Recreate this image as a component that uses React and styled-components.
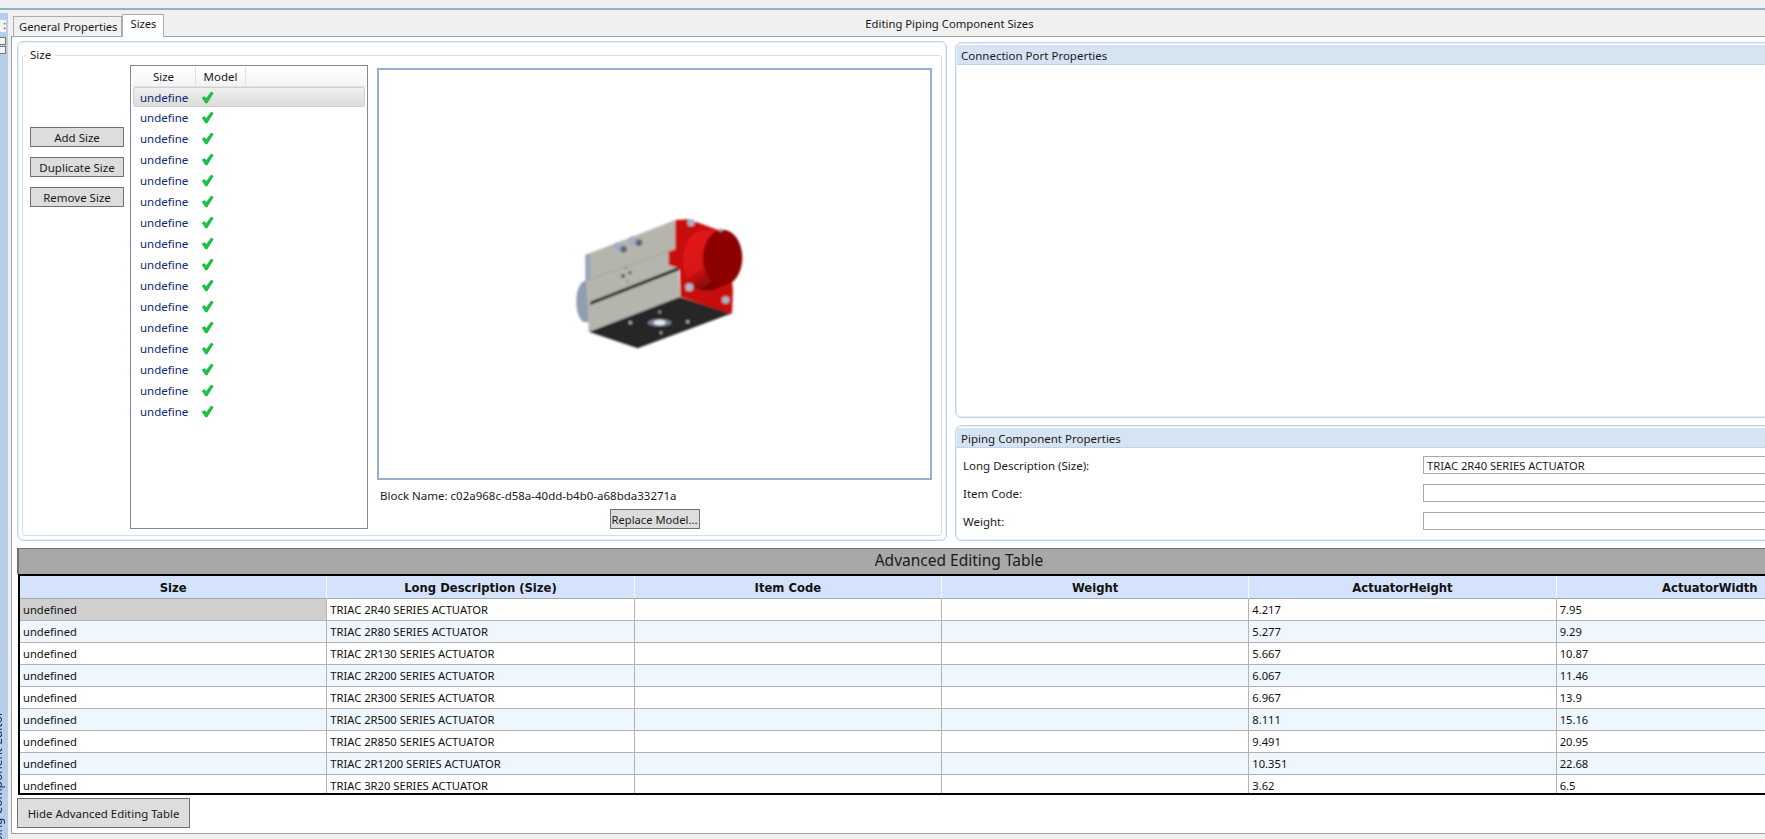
import styled, { createGlobalStyle } from "styled-components"

const sizes = [
  ["TRIAC 2R40 SERIES ACTUATOR", "4.217", "7.95"],
  ["TRIAC 2R80 SERIES ACTUATOR", "5.277", "9.29"],
  ["TRIAC 2R130 SERIES ACTUATOR", "5.667", "10.87"],
  ["TRIAC 2R200 SERIES ACTUATOR", "6.067", "11.46"],
  ["TRIAC 2R300 SERIES ACTUATOR", "6.967", "13.9"],
  ["TRIAC 2R500 SERIES ACTUATOR", "8.111", "15.16"],
  ["TRIAC 2R850 SERIES ACTUATOR", "9.491", "20.95"],
  ["TRIAC 2R1200 SERIES ACTUATOR", "10.351", "22.68"],
  ["TRIAC 3R20 SERIES ACTUATOR", "3.62", "6.5"],
]

const listRows = Array.from({ length: 16 }, (_, i) => i)

const CheckIcon = () => (
  <svg width="13" height="13" viewBox="0 0 13 13">
    <path d="M1.2 6.8 L3.6 5.6 L5.2 7.8 L10.2 1 L12.2 2.2 L6 12 L4.6 12 Z" fill="#12c83c" stroke="#0d8f3a" strokeWidth="0.5" />
  </svg>
)

const ActuatorModel = () => (
  <svg width="240" height="180" viewBox="-16 -18 720 540">
    <defs>
      <filter id="soft"><feGaussianBlur stdDeviation="3.4" /></filter>
      <linearGradient id="barrel" x1="0" y1="0" x2="0.45" y2="1">
        <stop offset="0" stopColor="#e81c1c" />
        <stop offset="0.65" stopColor="#d81414" />
        <stop offset="1" stopColor="#7c0505" />
      </linearGradient>
    </defs>
    <g filter="url(#soft)">
      <ellipse cx="135" cy="335" rx="27" ry="62" fill="#8e9db0" />
      <polygon points="145,425 415,320 575,370 292,475" fill="#262626" />
      <polygon points="135,195 405,90 420,320 145,425 138,280" fill="#b5b5ae" />
      <polygon points="135,195 150,190 150,268 135,276" fill="#93a6ba" />
      <polygon points="150,335 417,230 417,240 150,345" fill="#1c1c1c" />
      <line x1="150" y1="268" x2="395" y2="180" stroke="#97978f" strokeWidth="2" />
      <polygon points="405,90 445,88 560,130 578,300 575,370 560,368 420,320 418,235 385,225 385,185 405,178" fill="#c90a0a" />
      <polygon points="490,125 545,118 545,288 510,305 490,300" fill="url(#barrel)" />
      <ellipse cx="492" cy="212" rx="64" ry="90" fill="url(#barrel)" />
      <ellipse cx="547" cy="203" rx="59" ry="84" fill="#8c0202" />
      <circle cx="452" cy="98" r="11" fill="#a9b3c4" />
      <circle cx="447" cy="292" r="12" fill="#aeb8c8" />
      <circle cx="556" cy="330" r="11" fill="#a9b3c4" />
      <circle cx="541" cy="120" r="5" fill="#9aa5bb" />
      <circle cx="232" cy="170" r="13" fill="#a3aec4" />
      <circle cx="250" cy="178" r="10" fill="#5e6678" />
      <circle cx="277" cy="152" r="13" fill="#a3aec4" />
      <circle cx="296" cy="158" r="10" fill="#5e6678" />
      <circle cx="248" cy="258" r="6" fill="#55554f" />
      <circle cx="269" cy="248" r="5" fill="#55554f" />
      <circle cx="256" cy="234" r="3" fill="#6b6b64" />
      <circle cx="262" cy="275" r="3" fill="#6b6b64" />
      <ellipse cx="358" cy="398" rx="36" ry="11" fill="#77808e" />
      <ellipse cx="358" cy="398" rx="18" ry="8" fill="#e4e8f0" />
      <circle cx="270" cy="398" r="5" fill="#b4b8c0" />
      <circle cx="442" cy="395" r="5" fill="#b4b8c0" />
      <circle cx="358" cy="366" r="4" fill="#a8acb4" />
      <circle cx="362" cy="428" r="4" fill="#a8acb4" />
    </g>
  </svg>
)

export default function App() {
  return (
    <Page>
      <GlobalStyle />
      <TopStrip />
      <Workspace>
        <Sidebar>
          <DockGrip>:</DockGrip>
          <DockPin />
          <DockPin />
          <SidebarLabel>Piping Component Editor</SidebarLabel>
        </Sidebar>
        <Main>
          <TabRow>
            <Tabs>
              <Tab>General Properties</Tab>
              <Tab $active>Sizes</Tab>
            </Tabs>
            <EditorTitle>Editing Piping Component Sizes</EditorTitle>
          </TabRow>
          <Panel>
            <TopRow>
              <Card>
                <SizeGroup>
                  <legend>Size</legend>
                  <ButtonColumn>
                    <FlatButton>Add Size</FlatButton>
                    <FlatButton>Duplicate Size</FlatButton>
                    <FlatButton>Remove Size</FlatButton>
                  </ButtonColumn>
                  <SizeList>
                    <ListHead>
                      <ListHeadCell $w={64}>Size</ListHeadCell>
                      <ListHeadCell $w={50}>Model</ListHeadCell>
                    </ListHead>
                    {listRows.map((i) => (
                      <ListRow key={i} $selected={i === 0}>
                        <ListName>undefined</ListName>
                        <CheckIcon />
                      </ListRow>
                    ))}
                  </SizeList>
                  <PreviewColumn>
                    <Preview>
                      <ActuatorModel />
                    </Preview>
                    <BlockName>Block Name: c02a968c-d58a-40dd-b4b0-a68bda33271a</BlockName>
                    <ReplaceButton>Replace Model...</ReplaceButton>
                  </PreviewColumn>
                </SizeGroup>
              </Card>
              <RightColumn>
                <Card $grow>
                  <CardTitle>Connection Port Properties</CardTitle>
                </Card>
                <Card>
                  <CardTitle>Piping Component Properties</CardTitle>
                  <PropertyList>
                    <PropertyRow>
                      <span>Long Description (Size):</span>
                      <PropertyInput readOnly value="TRIAC 2R40 SERIES ACTUATOR" />
                    </PropertyRow>
                    <PropertyRow>
                      <span>Item Code:</span>
                      <PropertyInput readOnly value="" />
                    </PropertyRow>
                    <PropertyRow>
                      <span>Weight:</span>
                      <PropertyInput readOnly value="" />
                    </PropertyRow>
                  </PropertyList>
                </Card>
              </RightColumn>
            </TopRow>
            <AdvancedBar>Advanced Editing Table</AdvancedBar>
            <TableFrame>
              <AdvancedTable>
                <thead>
                  <tr>
                    <th>Size</th>
                    <th>Long Description (Size)</th>
                    <th>Item Code</th>
                    <th>Weight</th>
                    <th>ActuatorHeight</th>
                    <th>ActuatorWidth</th>
                  </tr>
                </thead>
                <tbody>
                  {sizes.map(([desc, height, width], i) => (
                    <tr key={desc}>
                      <SizeCell $selected={i === 0}>undefined</SizeCell>
                      <td>{desc}</td>
                      <td></td>
                      <td></td>
                      <td>{height}</td>
                      <td>{width}</td>
                    </tr>
                  ))}
                </tbody>
              </AdvancedTable>
            </TableFrame>
            <HideButton>Hide Advanced Editing Table</HideButton>
          </Panel>
        </Main>
      </Workspace>
    </Page>
  )
}

const GlobalStyle = createGlobalStyle`
  html, body {
    margin: 0;
    padding: 0;
    overflow: hidden;
    background: #f0f0f0;
  }
  * {
    box-sizing: border-box;
  }
  body, button, input {
    font-family: "Noto Sans", "Open Sans", sans-serif;
    font-size: 11.5px;
    color: #1a1a1a;
  }
`

const Page = styled.div`
  width: 1765px;
  height: 839px;
  overflow: hidden;
  background: #f0f0f0;
`

const TopStrip = styled.div`
  height: 10px;
  border-bottom: 2px solid #94b0cf;
`

const Workspace = styled.div`
  display: flex;
  height: 829px;
`

const Sidebar = styled.aside`
  flex: 0 0 8px;
  margin-top: 3px;
  display: flex;
  flex-direction: column;
  overflow: hidden;
  background: #b8cde8;
`

const DockGrip = styled.div`
  width: 6px;
  height: 12px;
  margin-top: 7px;
  background: #f4f4f4;
  font-size: 10px;
  line-height: 10px;
  text-align: right;
`

const DockPin = styled.div`
  width: 6px;
  height: 8px;
  margin-top: 1px;
  background: #f4f4f4;
  border: 1px solid #777;
  border-left: 0;

  &:nth-child(2) {
    margin-top: 5px;
  }
`

const SidebarLabel = styled.div`
  margin: auto 0 -14px -11px;
  writing-mode: vertical-rl;
  transform: rotate(180deg);
  white-space: nowrap;
  font-size: 12px;
  color: #10306e;
`

const Main = styled.main`
  flex: 0 0 1892px;
  display: flex;
  flex-direction: column;
`

const TabRow = styled.div`
  display: flex;
  height: 26px;
`

const Tabs = styled.div`
  display: flex;
  align-items: flex-end;
  flex: 0 0 154px;
  padding-left: 5px;
`

const Tab = styled.div`
  height: ${(p) => (p.$active ? 23 : 21)}px;
  padding: ${(p) => (p.$active ? "1px 7px 0" : "2px 4px 0 5px")};
  margin-bottom: -1px;
  background: ${(p) => (p.$active ? "#fff" : "#f0f0f0")};
  border: 1px solid #acacac;
  border-bottom: ${(p) => (p.$active ? "0" : "1px solid #acacac")};
  position: relative;
  z-index: 1;
  font-size: 11.2px;
  white-space: nowrap;
`

const EditorTitle = styled.div`
  width: 1570px;
  text-align: center;
  line-height: 28px;
  font-size: 11.3px;
`

const Panel = styled.div`
  width: 1892px;
  height: 798px;
  margin-left: 3px;
  padding: 4px 0 0 5px;
  background: #fff;
  border: 1px solid #a0a0a0;
  border-right: 0;
`

const TopRow = styled.div`
  display: grid;
  grid-template-columns: 930px 1fr;
  gap: 8px;
  width: 1882px;
  height: 500px;
`

const Card = styled.section`
  display: flex;
  flex-direction: column;
  flex: ${(p) => (p.$grow ? 1 : "0 0 116px")};
  padding: 2px 1px;
  border: 1px solid #c0d5ed;
  border-radius: 6px;
  box-shadow: inset 0 0 0 1px #e6eef7;
`

const SizeGroup = styled.fieldset`
  flex: 1;
  display: flex;
  min-width: 0;
  margin: 3px 3px 2px 3px;
  padding: 0 0 6px 7px;
  border: 1px solid #d5dfe5;
  border-radius: 3px;

  legend {
    margin-left: -4px;
    padding: 0 4px;
    line-height: 16px;
  }
`

const ButtonColumn = styled.div`
  flex: 0 0 94px;
  display: flex;
  flex-direction: column;
  gap: 10px;
  padding-top: 64px;
`

const FlatButton = styled.button`
  height: 20px;
  padding: 0;
  background: #dddddd;
  border: 1px solid #707070;
  white-space: nowrap;
`

const SizeList = styled.div`
  flex: 0 0 238px;
  height: 464px;
  margin: 2px 9px 0 6px;
  padding: 1px;
  background: #fff;
  border: 1px solid #828790;
  color: #0b2a72;
`

const ListHead = styled.div`
  display: flex;
  height: 20px;
  background: linear-gradient(#ffffff, #f3f4f6);
  border-bottom: 1px solid #e3e4e6;
  color: #1a1a1a;
`

const ListHeadCell = styled.div`
  width: ${(p) => p.$w}px;
  text-align: center;
  line-height: 19px;
  border-right: 1px solid #e0e2e6;
`

const ListRow = styled.div`
  display: flex;
  align-items: center;
  height: ${(p) => (p.$selected ? 20 : 21)}px;
  margin: 0 1px;
  padding-left: 6px;
  border: 1px solid ${(p) => (p.$selected ? "#d0d0d0" : "transparent")};
  border-radius: 2px;
  background: ${(p) => (p.$selected ? "linear-gradient(#f0f0f0, #dcdcdc)" : "transparent")};
`

const ListName = styled.div`
  width: 49px;
  margin-right: 12px;
  overflow: hidden;
  white-space: nowrap;
`

const PreviewColumn = styled.div`
  flex: 0 0 555px;
  display: flex;
  flex-direction: column;
`

const Preview = styled.div`
  display: flex;
  align-items: center;
  justify-content: center;
  height: 412px;
  margin-top: 5px;
  border: 2px solid #94b0cf;
`

const BlockName = styled.div`
  padding: 8px 3px 4px;
  line-height: 16px;
`

const ReplaceButton = styled(FlatButton)`
  align-self: center;
  flex: 0 0 20px;
  width: 90px;
  margin-top: 1px;
  font-size: 11.2px;
`

const RightColumn = styled.div`
  display: flex;
  flex-direction: column;
  gap: 7px;
  height: 499px;
  margin-top: 1px;
`

const CardTitle = styled.div`
  height: 20px;
  padding: 1px 0 0 4px;
  background: #d6e4f2;
  border-bottom: 1px solid #bcd4ee;
  line-height: 19px;
`

const PropertyList = styled.div`
  display: flex;
  flex-direction: column;
  gap: 10px;
  padding: 8px 0 0 6px;
`

const PropertyRow = styled.div`
  display: grid;
  grid-template-columns: 460px 1fr;
  align-items: center;
  height: 18px;
`

const PropertyInput = styled.input`
  width: 100%;
  height: 18px;
  padding: 0 3px;
  background: #fff;
  border: 1px solid #a9a9a9;
  outline: 0;
  font-size: 11.2px;
`

const AdvancedBar = styled.div`
  height: 26px;
  width: 1882px;
  margin-top: 7px;
  background: #a8a8a8;
  border-top: 1px solid #707070;
  border-left: 2px solid #707070;
  font-size: 15.5px;
  line-height: 23px;
  text-align: center;
`

const TableFrame = styled.div`
  width: 1880px;
  height: 221px;
  margin-left: 1px;
  overflow: hidden;
  border: 2px solid #000;
`

const AdvancedTable = styled.table`
  width: 1844px;
  table-layout: fixed;
  border-collapse: separate;
  border-spacing: 0;

  th {
    height: 23px;
    padding: 2px 0 0;
    background: #d4e2fb;
    border-right: 1px solid #f4f8ff;
    border-bottom: 1px solid #a8a8a8;
    font-family: "DejaVu Sans", sans-serif;
    font-size: 11.6px;
    font-weight: 700;
    color: #111;
  }
  td {
    height: 22px;
    padding: 0 3px;
    border-right: 1px solid #b4b4b4;
    border-bottom: 1px solid #b4b4b4;
    color: #111;
    font-size: 11.2px;
    white-space: nowrap;
  }
  tbody tr:nth-child(even) td {
    background: #eef6fe;
  }
`

const SizeCell = styled.td`
  ${(p) => p.$selected && "background: #cfcfcf;"}
`

const HideButton = styled.button`
  display: block;
  width: 173px;
  height: 30px;
  margin-top: 3px;
  padding: 0;
  background: #dddddd;
  border: 1px solid #707070;
  font-size: 11.4px;
`
